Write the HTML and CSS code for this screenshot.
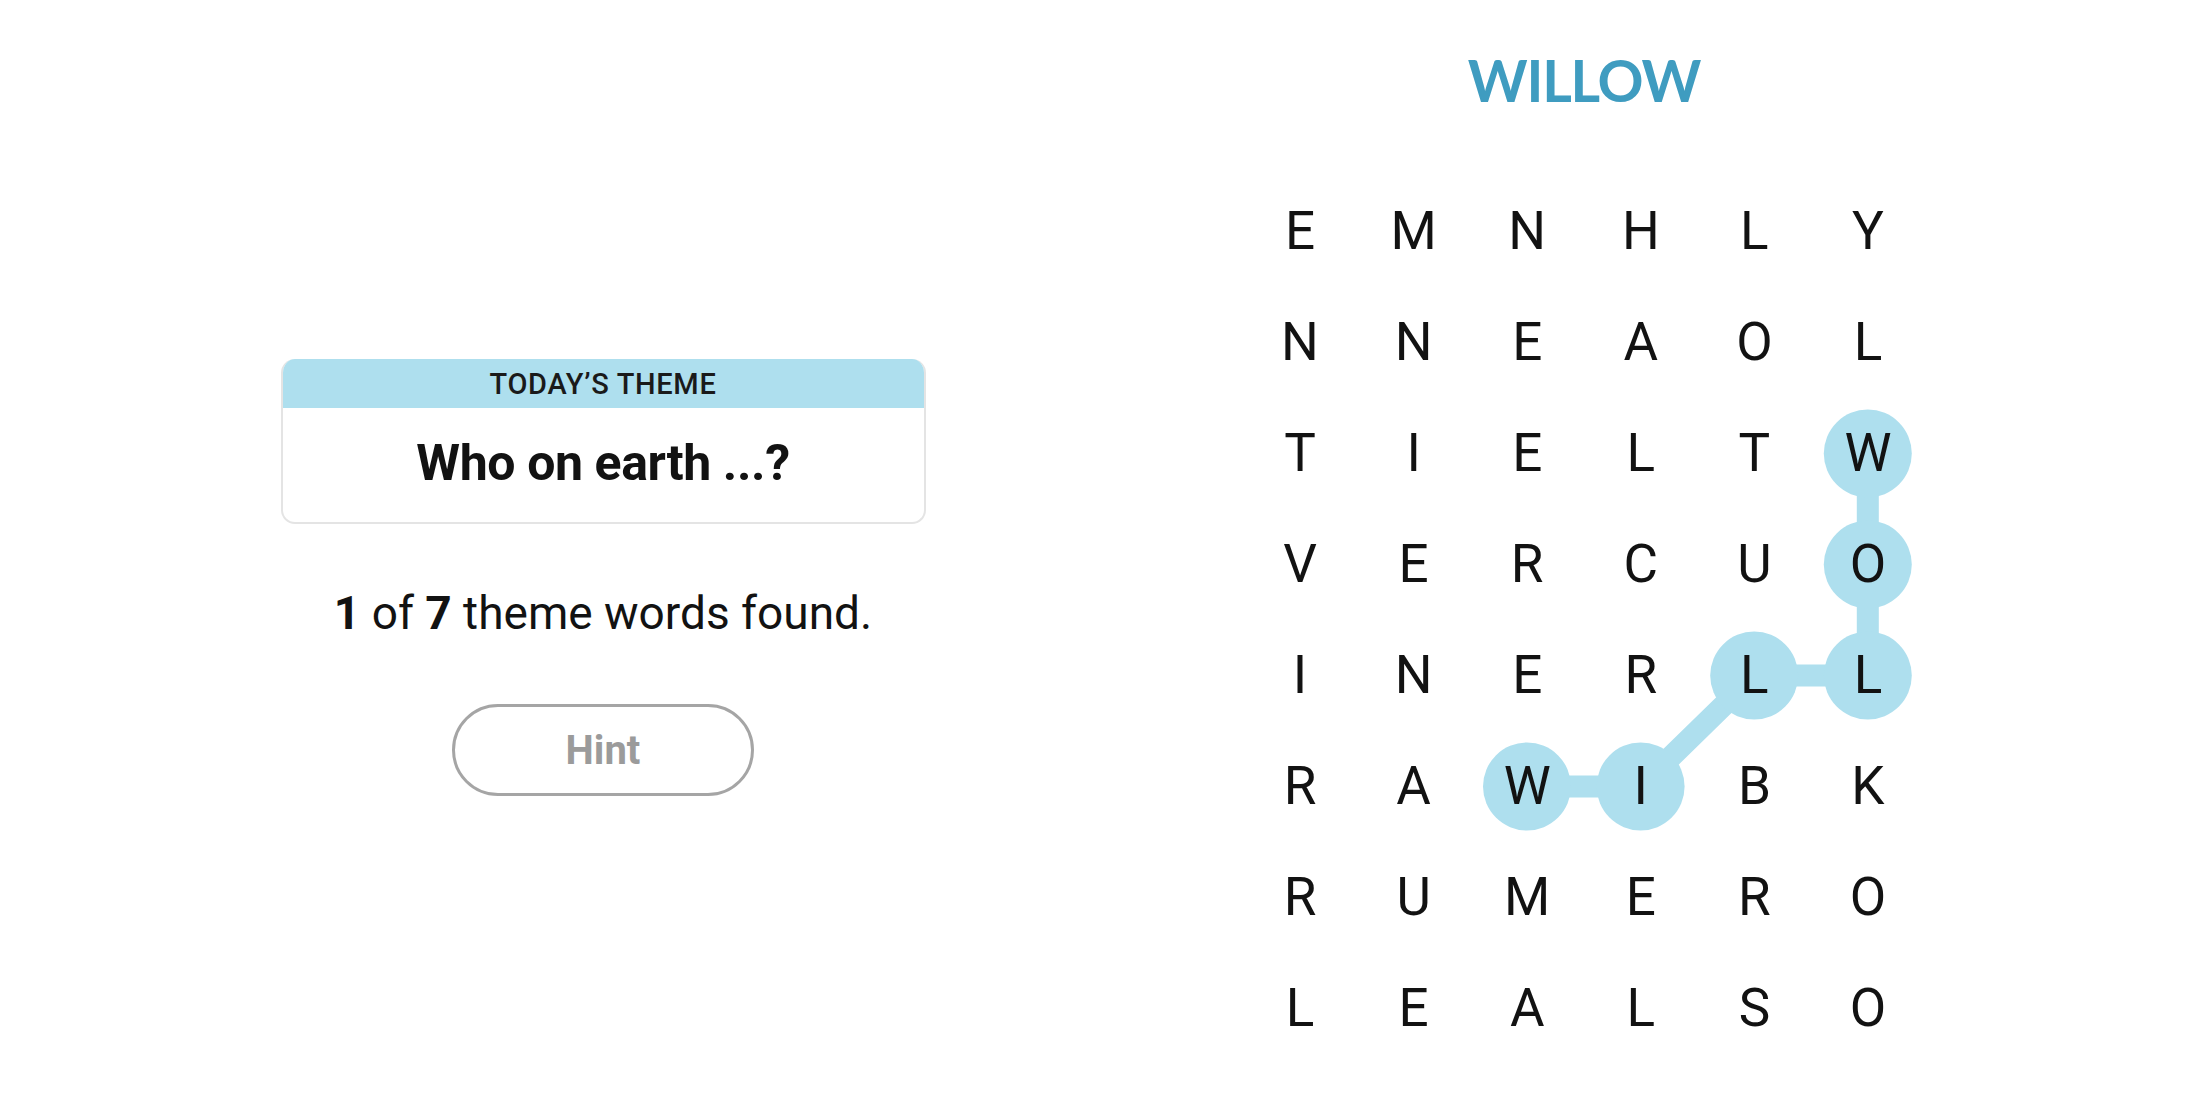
FILE: index.html
```html
<!DOCTYPE html>
<html lang="en">
<head>
<meta charset="utf-8">
<title>Strands</title>
<link rel="stylesheet" href="styles.css">
</head>
<body>
<main class="page">
  <section class="left">
    <div class="theme-card">
      <div class="theme-head">TODAY’S THEME</div>
      <div class="theme-body">Who on earth ...?</div>
    </div>
    <p class="progress"><b>1</b> of <b>7</b> theme words found.</p>
    <button class="hint">Hint</button>
  </section>
  <section class="right">
    <h1 class="found-word">WILLOW</h1>
    <div class="board">
      <svg class="path" viewBox="0 0 681.6 888" width="681.6" height="888" aria-hidden="true">
        <polyline points="624.8,277.5 624.8,388.5 624.8,499.5 511.2,499.5 397.6,610.5 284,610.5" fill="none" stroke="#aedfee" stroke-width="22" stroke-linejoin="round"/>
        <circle cx="624.8" cy="277.5" r="44" fill="#aedfee"/>
        <circle cx="624.8" cy="388.5" r="44" fill="#aedfee"/>
        <circle cx="624.8" cy="499.5" r="44" fill="#aedfee"/>
        <circle cx="511.2" cy="499.5" r="44" fill="#aedfee"/>
        <circle cx="397.6" cy="610.5" r="44" fill="#aedfee"/>
        <circle cx="284" cy="610.5" r="44" fill="#aedfee"/>
      </svg>
      <span class="cell">E</span><span class="cell">M</span><span class="cell">N</span><span class="cell">H</span><span class="cell">L</span><span class="cell">Y</span>
      <span class="cell">N</span><span class="cell">N</span><span class="cell">E</span><span class="cell">A</span><span class="cell">O</span><span class="cell">L</span>
      <span class="cell">T</span><span class="cell">I</span><span class="cell">E</span><span class="cell">L</span><span class="cell">T</span><span class="cell">W</span>
      <span class="cell">V</span><span class="cell">E</span><span class="cell">R</span><span class="cell">C</span><span class="cell">U</span><span class="cell">O</span>
      <span class="cell">I</span><span class="cell">N</span><span class="cell">E</span><span class="cell">R</span><span class="cell">L</span><span class="cell">L</span>
      <span class="cell">R</span><span class="cell">A</span><span class="cell">W</span><span class="cell">I</span><span class="cell">B</span><span class="cell">K</span>
      <span class="cell">R</span><span class="cell">U</span><span class="cell">M</span><span class="cell">E</span><span class="cell">R</span><span class="cell">O</span>
      <span class="cell">L</span><span class="cell">E</span><span class="cell">A</span><span class="cell">L</span><span class="cell">S</span><span class="cell">O</span>
    </div>
  </section>
</main>
</body>
</html>
```
FILE: styles.css
```css
* { box-sizing: border-box; }
html, body { margin: 0; padding: 0; background: #fff; }
body {
  width: 2200px;
  height: 1100px;
  overflow: hidden;
  font-family: Roboto, "Liberation Sans", sans-serif;
  color: #121212;
}
.page {
  display: flex;
  width: 2200px;
  height: 1100px;
}
.left {
  width: 1206px;
  display: flex;
  flex-direction: column;
  align-items: center;
  padding-top: 359px;
}
.theme-card {
  width: 645px;
  height: 165px;
  border: 2px solid #e4e4e4;
  border-top: none;
  border-radius: 14px;
  overflow: hidden;
  display: flex;
  flex-direction: column;
}
.theme-head {
  height: 49px;
  background: #aedfee;
  display: flex;
  align-items: center;
  justify-content: center;
  font-size: 29px;
  font-weight: 500;
  letter-spacing: 0.7px;
  color: #1a1a1a;
}
.theme-body {
  flex: 1;
  display: flex;
  align-items: center;
  justify-content: center;
  font-size: 50px;
  font-weight: 700;
  letter-spacing: -0.4px;
  color: #121212;
  padding-bottom: 4px;
}
.progress {
  margin: 63px 0 0;
  height: 52px;
  line-height: 52px;
  font-size: 46px;
  color: #121212;
}
.progress b { font-weight: 700; }
.hint {
  margin-top: 65px;
  width: 302px;
  height: 92px;
  border: 3px solid #a5a5a5;
  border-radius: 46px;
  background: #fff;
  font-family: Roboto, "Liberation Sans", sans-serif;
  font-size: 40px;
  font-weight: 700;
  color: #9b9b9b;
  padding: 0;
}
.right {
  width: 756px;
  display: flex;
  flex-direction: column;
  align-items: center;
}
.found-word {
  margin: 52px 0 0;
  height: 57px;
  line-height: 57px;
  font-family: Lato, "Open Sans", sans-serif;
  font-size: 57px;
  font-weight: 700;
  letter-spacing: -1.2px;
  color: #3f9cc0;
}
.board {
  position: relative;
  margin-top: 66.5px;
  display: grid;
  grid-template-columns: repeat(6, 113.6px);
  grid-auto-rows: 111px;
}
.path {
  position: absolute;
  left: 0;
  top: 0;
  z-index: 0;
}
.cell {
  position: relative;
  z-index: 1;
  display: flex;
  align-items: center;
  justify-content: center;
  font-size: 53px;
  font-weight: 400;
  color: #121212;
}
```
